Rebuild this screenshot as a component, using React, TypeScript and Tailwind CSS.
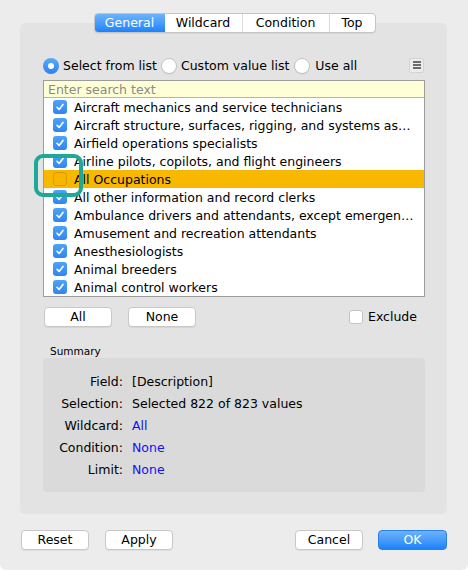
import React from "react";

const ITEMS = [
  { label: "Aircraft mechanics and service technicians", on: true },
  { label: "Aircraft structure, surfaces, rigging, and systems assemblers", on: true },
  { label: "Airfield operations specialists", on: true },
  { label: "Airline pilots, copilots, and flight engineers", on: true },
  { label: "All Occupations", on: false, hl: true },
  { label: "All other information and record clerks", on: true },
  { label: "Ambulance drivers and attendants, except emergency medical technicians", on: true },
  { label: "Amusement and recreation attendants", on: true },
  { label: "Anesthesiologists", on: true },
  { label: "Animal breeders", on: true },
  { label: "Animal control workers", on: true },
];

const SUMMARY = [
  { k: "Field:", v: "[Description]", link: false },
  { k: "Selection:", v: "Selected 822 of 823 values", link: false },
  { k: "Wildcard:", v: "All", link: true },
  { k: "Condition:", v: "None", link: true },
  { k: "Limit:", v: "None", link: true },
];

function Check({ on, hl }: { on: boolean; hl?: boolean }) {
  if (on) {
    return (
      <span className="w-[14px] h-[14px] rounded-[3px] bg-gradient-to-b from-[#4ea2f8] to-[#2f86f3] flex items-center justify-center shrink-0">
        <svg width="10" height="10" viewBox="0 0 10 10">
          <path d="M2 5.3 L4.1 7.4 L8 2.4" fill="none" stroke="white" strokeWidth="1.6" strokeLinecap="round" strokeLinejoin="round" />
        </svg>
      </span>
    );
  }
  return (
    <span
      className={`w-[14px] h-[14px] rounded-[3px] shrink-0 border ${
        hl ? "border-[#d99c00] bg-[#f7b500]" : "border-[#b9b9b9] bg-white"
      }`}
    />
  );
}

function Radio({ on }: { on: boolean }) {
  return on ? (
    <span className="w-[16px] h-[16px] rounded-full bg-gradient-to-b from-[#5aa9f9] to-[#2a82f3] flex items-center justify-center shrink-0">
      <span className="w-[6px] h-[6px] rounded-full bg-white" />
    </span>
  ) : (
    <span className="block w-[16px] h-[16px] rounded-full bg-white border border-[#c4c4c4] shadow-[0_1px_0_rgba(0,0,0,0.05)] shrink-0" />
  );
}

function Btn({ children, w = "w-[68px]", primary }: { children: React.ReactNode; w?: string; primary?: boolean }) {
  return (
    <button
      className={`${w} h-[20px] rounded-[4px] text-[12.5px] leading-none flex items-center justify-center ${
        primary
          ? "bg-gradient-to-b from-[#6cb3fa] to-[#1a82fb] text-white border border-[#2b7fe8]"
          : "bg-white text-black border border-[#c8c8c8] shadow-[0_1px_0_rgba(0,0,0,0.06)]"
      }`}
    >
      {children}
    </button>
  );
}

export default function App() {
  return (
    <div
      className="w-[468px] h-[570px] bg-[#ececec] relative overflow-hidden rounded-b-[6px] text-black"
      style={{ fontFamily: '"DejaVu Sans", Verdana, sans-serif' }}
    >
      <div className="pt-[13px] flex justify-center relative z-10 pl-[1px]">
        <div className="flex h-[20px] rounded-[4px] border border-[#c4c4c4] bg-white overflow-hidden text-[12.5px] shadow-[0_1px_0_rgba(0,0,0,0.05)]">
          <div className="w-[70px] flex items-center justify-center bg-gradient-to-b from-[#6cb3fa] to-[#1a82fb] text-white pt-[1px]">General</div>
          <div className="w-[78px] flex items-center justify-center border-r border-[#dadada] pt-[1px]">Wildcard</div>
          <div className="w-[87px] flex items-center justify-center border-r border-[#dadada] pt-[1px]">Condition</div>
          <div className="w-[45px] flex items-center justify-center pt-[1px]">Top</div>
        </div>
      </div>

      <div className="ml-[20px] mr-[21px] -mt-[10px] bg-[#e3e3e3] rounded-[5px] pt-[34px] pl-[23px] pr-[22px] pb-[22px]">
        <div className="h-[18px] flex items-center text-[12.5px]">
          <Radio on />
          <span className="ml-[4px]">Select from list</span>
          <span className="ml-[4px]"><Radio on={false} /></span>
          <span className="ml-[4px]">Custom value list</span>
          <span className="ml-[5px]"><Radio on={false} /></span>
          <span className="ml-[5px]">Use all</span>
          <span className="ml-auto mr-[1px] -mt-[2px] w-[15px] h-[15px] rounded-[2px] bg-[#ececec] border border-[#d4d4d4] flex flex-col items-center justify-center gap-[1px]">
            <span className="w-[8px] h-[2px] bg-[#6b6b6b]" />
            <span className="w-[8px] h-[2px] bg-[#6b6b6b]" />
            <span className="w-[8px] h-[2px] bg-[#6b6b6b]" />
          </span>
        </div>

        <div className="mt-[5px] border border-[#9c9c9c] bg-white">
          <div className="h-[17px] bg-[#ffffd6] border-b border-[#b4b4b4] px-[4px] flex items-center text-[12.5px] text-[#8a8a8a]">
            <span className="mt-[2px]">Enter search text</span>
          </div>
          <div>
            {ITEMS.map((it) => (
              <div
                key={it.label}
                className={`h-[18px] flex items-center pl-[9px] pr-[10px] text-[12.5px] ${it.hl ? "bg-[#f9b800]" : ""}`}
              >
                <Check on={it.on} hl={it.hl} />
                <span className="ml-[7px] mt-[2px] truncate">{it.label}</span>
              </div>
            ))}
          </div>
        </div>

        <div className="mt-[10px] flex items-center">
          <span className="ml-[1px]"><Btn>All</Btn></span>
          <span className="ml-[16px]"><Btn>None</Btn></span>
          <div className="ml-auto mr-[8px] flex items-center text-[12.5px]">
            <span className="w-[14px] h-[14px] rounded-[3px] bg-white border border-[#c4c4c4]" />
            <span className="ml-[5px]">Exclude</span>
          </div>
        </div>

        <div className="mt-[18px] pl-[7px] h-[13px] text-[10.5px] leading-[13px]">Summary</div>

        <div className="bg-[#dadada] rounded-[4px] pt-[12px] pb-[12px] text-[12.5px]">
          {SUMMARY.map((r) => (
            <div key={r.k} className="h-[22px] flex items-center pt-[2px]">
              <span className="w-[80px] text-right">{r.k}</span>
              <span className={`ml-[9px] ${r.link ? "text-[#1010f5]" : ""}`}>{r.v}</span>
            </div>
          ))}
        </div>
      </div>

      <div className="mt-[16px] flex items-center pl-[21px] pr-[21px]">
        <Btn>Reset</Btn>
        <span className="ml-[16px]"><Btn>Apply</Btn></span>
        <span className="ml-auto"><Btn>Cancel</Btn></span>
        <span className="ml-[15px]"><Btn w="w-[69px]" primary>OK</Btn></span>
      </div>

      <div className="absolute left-[34px] top-[154px] w-[49px] h-[43px] border-[4px] border-[#1fa898] rounded-[9px]" />
    </div>
  );
}
